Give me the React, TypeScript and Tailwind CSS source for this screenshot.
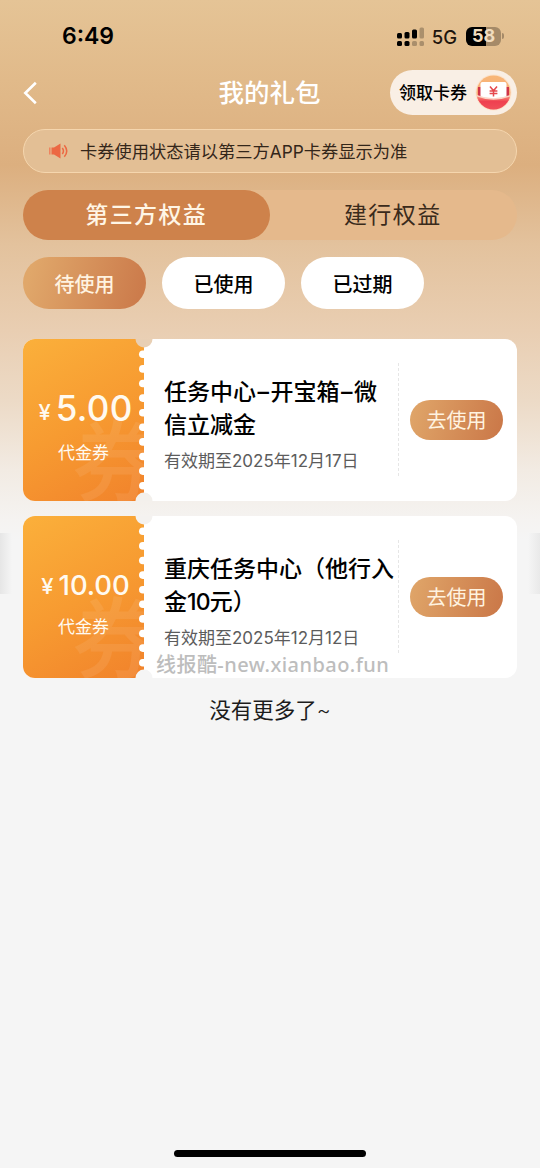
import React from "react";

type Coupon = {
  amount: string;
  amountClass: string;
  symbolClass: string;
  labelClass: string;
  lines: string[];
  expiry: string;
  watermark?: string;
};

const coupons: Coupon[] = [
  {
    amount: "5.00",
    amountClass: "text-[35px] font-medium tracking-[0.3px] ml-[5px]",
    symbolClass: "relative -top-px text-[22px] font-medium",
    labelClass: "mt-[12px]",
    lines: ["任务中心–开宝箱–微", "信立减金"],
    expiry: "有效期至2025年12月17日",
  },
  {
    amount: "10.00",
    amountClass: "text-[27.5px] font-medium tracking-[-0.1px] ml-[5px]",
    symbolClass: "relative -top-px text-[22px] font-medium",
    labelClass: "mt-[9px]",
    lines: ["重庆任务中心（他行入", "金10元）"],
    expiry: "有效期至2025年12月12日",
    watermark: "线报酷-new.xianbao.fun",
  },
];

function StatusBar() {
  return (
    <div className="flex h-[70px] items-start justify-between pl-[62px] pr-[36px] pt-[22px]">
      <span className="text-[23px] font-semibold leading-[28px] text-black">6:49</span>
      <div className="flex h-[28px] items-center">
        <svg width="28" height="20" viewBox="0 0 28 20" className="-mt-[1px]">
          <g fill="#000">
            <rect x="0" y="7" width="5" height="5.5" rx="1.5" />
            <rect x="7.5" y="6" width="5" height="6.5" rx="1.5" />
            <rect x="15" y="3.5" width="5" height="9" rx="1.5" />
            <rect x="0" y="15" width="5" height="5" rx="1.5" />
            <rect x="7.5" y="15" width="5" height="5" rx="1.5" />
          </g>
          <g fill="#000" fillOpacity="0.25">
            <rect x="22.5" y="1.5" width="4.5" height="11" rx="1.5" />
            <rect x="15" y="15" width="5" height="5" rx="1.5" />
            <rect x="22.5" y="15" width="4.5" height="5" rx="1.5" />
          </g>
        </svg>
        <span className="ml-[7px] mt-px text-[18.5px] font-medium leading-[28px] text-[#1d150d]">5G</span>
        <div className="ml-[9px] flex items-center">
          <div className="flex h-[19px] w-[35px] items-center justify-center rounded-[6px] bg-[linear-gradient(90deg,#000_58%,#a58a68_58%)] text-[18px] font-bold leading-none text-[#f1dcbe]">
            58
          </div>
          <div className="ml-[1px] h-[6px] w-[2px] rounded-r-full bg-[#a58a68]" />
        </div>
      </div>
    </div>
  );
}

function Envelope() {
  return (
    <svg width="37" height="37" viewBox="0 0 37 37">
      <defs>
        <clipPath id="disc">
          <circle cx="18.5" cy="18.5" r="17" />
        </clipPath>
        <linearGradient id="disc-top" x1="0" y1="0" x2="0" y2="1">
          <stop offset="0" stopColor="#f8b878" />
          <stop offset="1" stopColor="#f7a276" />
        </linearGradient>
        <linearGradient id="pocket" x1="0" y1="0" x2="0" y2="1">
          <stop offset="0" stopColor="#f98d78" />
          <stop offset="0.35" stopColor="#ef4050" />
          <stop offset="1" stopColor="#f0525a" />
        </linearGradient>
      </defs>
      <circle cx="18.5" cy="18.5" r="18" fill="#fce3cc" />
      <g clipPath="url(#disc)">
        <rect width="37" height="37" fill="url(#disc-top)" />
        <rect x="3" y="13" width="31" height="14" fill="#cf3347" />
        <rect x="5.5" y="8" width="26" height="20" rx="2" fill="#fff" />
        <path d="M2 21 Q18.5 27.5 35 21 V37 H2Z" fill="#fbd3c5" />
        <path d="M2 22.5 Q18.5 29 35 22.5 V37 H2Z" fill="url(#pocket)" />
      </g>
      <path d="M15 12.5 18.5 16.8 22 12.5M18.5 16.8V22.4M14.6 17H22.4M14.6 19.5H22.4" fill="none" stroke="#e5484d" strokeWidth="1.5" />
    </svg>
  );
}

function Header() {
  return (
    <div className="grid h-[45px] grid-cols-[1fr_auto_1fr] items-center px-[23px]">
      <svg width="14" height="24" viewBox="0 0 14 24" fill="none" stroke="#fff" strokeWidth="2.6">
        <path d="M12.8 1.8 2.3 12 12.8 22.2" />
      </svg>
      <h1 className="-ml-px text-[25.5px] font-medium leading-[36px] text-white">我的礼包</h1>
      <button className="flex h-[45px] w-[127px] items-center justify-between justify-self-end whitespace-nowrap rounded-full bg-[#f9efe5] pl-[9px] pr-[5px] text-[17px] font-medium text-black">
        <span className="pt-[2px]">领取卡券</span>
        <Envelope />
      </button>
    </div>
  );
}

function Notice() {
  return (
    <div className="mx-[23px] mt-[14px] flex h-[44px] items-center rounded-full border-[1.5px] border-[#f5d6ae] bg-[#e3bf95] pl-[25px]">
      <svg width="20" height="16" viewBox="0 0 20 16" fill="none">
        <path d="M0.8 4.6V11.4" stroke="#f0805c" strokeWidth="1.5" />
        <path d="M2.5 4.5H5L11.5 0.4V15.6L5 11.5H2.5Z" fill="#ec6843" />
        <path d="M13.3 5Q15.6 8 13.3 11" stroke="#ec6843" strokeWidth="1.5" />
        <path d="M15.3 2.2Q20.2 8 15.3 13.8" stroke="#ec6843" strokeWidth="1.5" />
      </svg>
      <span className="ml-[11px] mt-[2px] whitespace-nowrap text-[17.25px] leading-[24px] text-[#33261a]">卡券使用状态请以第三方APP卡券显示为准</span>
    </div>
  );
}

function Tabs() {
  return (
    <div className="mx-[23px] mt-[17px] flex h-[50px] rounded-full bg-[#e5b98c] text-[23px]">
      <button className="h-full flex-1 rounded-full bg-[#ce824b] pt-[1px] font-medium tracking-[1.4px] text-[#fff6e6]">第三方权益</button>
      <button className="h-full flex-1 pr-px pt-[1px] tracking-[1.4px] text-[#3a2a1b]">建行权益</button>
    </div>
  );
}

function Filters() {
  return (
    <div className="ml-[23px] mt-[17px] flex gap-[16px] text-[20px] font-medium">
      <button className="h-[52px] w-[123px] rounded-full bg-[linear-gradient(105deg,#e0a76a_8%,#cc7c4c_92%)] pt-[3px] text-[#fff3e0]">待使用</button>
      <button className="h-[52px] w-[123px] rounded-full bg-white pt-[3px] text-black">已使用</button>
      <button className="h-[52px] w-[123px] rounded-full bg-white pt-[3px] text-black">已过期</button>
    </div>
  );
}

function Stub({ coupon, notchTop, notchBottom }: { coupon: Coupon; notchTop: string; notchBottom: string }) {
  return (
    <div className="relative h-full w-[121px] shrink-0 overflow-hidden rounded-l-[12px] bg-[linear-gradient(150deg,#fbb03b_0%,#f79b31_50%,#f1822b_100%)] text-[#fffaf0]">
      <span className="absolute left-[49px] top-[79px] text-[88px] font-medium leading-[88px] text-white/[0.08]">券</span>
      <div className="relative flex h-full flex-col items-center pt-[48px]">
        <div className="flex h-[42px] items-baseline whitespace-nowrap pl-[4px] leading-[42px]">
          <span className={coupon.symbolClass}>¥</span>
          <span className={coupon.amountClass}>{coupon.amount}</span>
        </div>
        <span className={"text-[17px] leading-[24px] " + coupon.labelClass}>代金券</span>
      </div>
      <svg className="absolute right-0 top-0" width="10" height="162" viewBox="0 0 10 162">
        {Array.from({ length: 10 }, (_, i) => (
          <rect key={i} x="5" y={11.5 + i * 14.6} width="12" height="7.6" rx="3.8" fill="#fff" />
        ))}
        <circle cx="10" cy="0" r="8.5" fill={notchTop} />
        <circle cx="10" cy="162" r="8.5" fill={notchBottom} />
      </svg>
    </div>
  );
}

function TitleLine({ text }: { text: string }) {
  return (
    <span className="block">
      {text.split(/(–|10)/).map((part, i) => {
        if (part === "–") return <span key={i} className="inline-block w-[14.5px] text-center">–</span>;
        if (part === "10") return <span key={i} className="tracking-[-0.8px]">10</span>;
        return part;
      })}
    </span>
  );
}

function Card({ coupon, notchTop, notchBottom }: { coupon: Coupon; notchTop: string; notchBottom: string }) {
  return (
    <article className="relative flex h-[162px] rounded-[12px] bg-white">
      <Stub coupon={coupon} notchTop={notchTop} notchBottom={notchBottom} />
      <svg className="absolute left-[121px] top-0" width="9" height="162" viewBox="0 0 9 162">
        <circle cx="0" cy="0" r="8.5" fill={notchTop} />
        <circle cx="0" cy="162" r="8.5" fill={notchBottom} />
      </svg>
      <div className="w-[254px] shrink-0 pl-[20px] pt-[37px]">
        <h2 className="whitespace-nowrap text-[23px] font-medium leading-[33px] text-black">
          {coupon.lines.map((line) => (
            <TitleLine key={line} text={line} />
          ))}
        </h2>
        <p className="mt-[7px] whitespace-nowrap text-[17px] leading-[24px] text-[#5c5c5c]">{coupon.expiry}</p>
      </div>
      <div className="mt-[24px] h-[114px] w-px bg-[repeating-linear-gradient(180deg,#e6e6e6_0px,#e6e6e6_3px,transparent_3px,transparent_5px)]" />
      <button className="ml-[11px] mt-[61px] h-[40px] w-[93px] rounded-full bg-[linear-gradient(105deg,#dfa468_5%,#cb7949_95%)] pt-[2px] text-[20px] leading-[38px] text-[#fff3e0]">
        去使用
      </button>
      {coupon.watermark && (
        <span className="absolute left-[133px] top-[136px] whitespace-nowrap font-['Noto_Sans','Noto_Sans_CJK_SC',sans-serif] text-[20px] font-medium leading-[26px] tracking-[0.45px] text-[#bdbdbd]">
          {coupon.watermark}
        </span>
      )}
    </article>
  );
}

export default function App() {
  return (
    <main className="relative flex h-[1168px] w-[540px] flex-col overflow-hidden bg-[linear-gradient(180deg,#e5c496_0px,#e1ba8a_80px,#dcaf7f_165px,#e3c29d_245px,#e9ceb2_330px,#ecdac6_400px,#f2ebe3_470px,#f5f3f1_520px,#f5f5f5_540px)] font-['Inter','Noto_Sans_CJK_SC',sans-serif]">
      <div className="absolute left-0 top-[533px] h-[61px] w-[12px] bg-[linear-gradient(90deg,#e6e6e6,#f5f5f5)]" />
      <div className="absolute right-0 top-[533px] h-[61px] w-[12px] bg-[linear-gradient(270deg,#e9e9e9,#f5f5f5)]" />
      <StatusBar />
      <Header />
      <Notice />
      <Tabs />
      <Filters />
      <section className="mx-[23px] mt-[30px] flex flex-col gap-[15px]">
        <Card coupon={coupons[0]} notchTop="#e8cfb4" notchBottom="#f3f0ec" />
        <Card coupon={coupons[1]} notchTop="#f4f2f0" notchBottom="#f5f5f5" />
      </section>
      <p className="mt-[16px] text-center text-[21.5px] leading-[32px] text-[#1c1c1c]">
        没有更多了<span className="font-light">~</span>
      </p>
      <div className="mx-auto mb-[11px] mt-auto h-[7px] w-[192px] rounded-full bg-black" />
    </main>
  );
}
